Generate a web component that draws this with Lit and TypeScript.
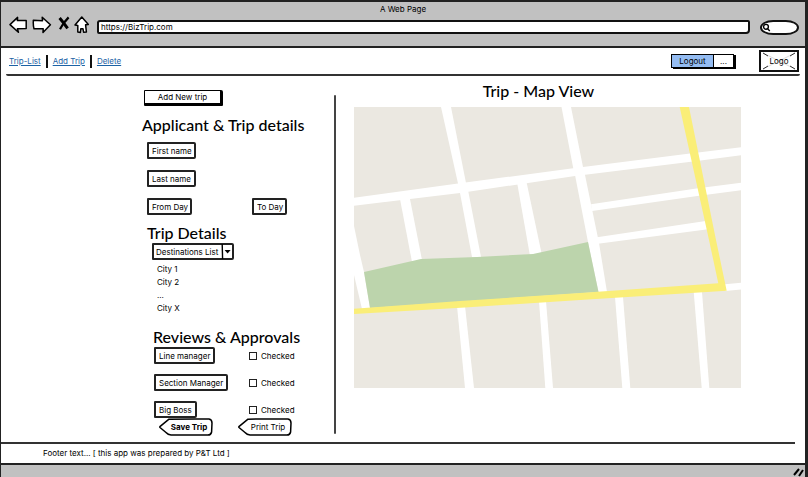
import { LitElement, html, css, svg } from "lit";
import { customElement, property, state } from "lit/decorators.js";

@customElement("map-view")
class MapView extends LitElement {
  static styles = css`
    :host {
      display: block;
    }
    .map {
      display: block;
      width: 100%;
      height: auto;
    }
    .land {
      fill: #ebe8e1;
    }
    .road {
      fill: #fff;
    }
    .park {
      fill: #bcd4ac;
    }
    .highway {
      fill: #faee78;
    }
  `;

  private roads = [
    "354,197.7 458,183.5 575,168 690,153.5 741,147.3 741,155.3 693,161.5 575,176 460,193 354,205.7",
    "441,107 451,107 466,183 468,190 481,257 472,257 460,193 458,183.5",
    "561.5,107 571,107 583,167 585,175 599,243 607,292 598.5,292 588,242 575,175 573,167",
    "354,226 360,255 364,272 370,308 362,309 354,275",
    "400,199 410,199 422,260 412,262",
    "517,182 526.5,182 541.7,254 530,256",
    "591,204.3 698,188.3 741,182.7 741,190.3 699,195.7 592,211",
    "597,237.2 705.7,221 708,229.3 598,243.7",
    "725,284.2 741,282.7 741,289.5 725,291",
    "457,306 465,306 474,388 465,388",
    "539,301 546,301 553,388 545.3,388",
    "615,297 623,297 630.3,388 622.3,388",
    "693.7,292 702,292 709.3,388 701.7,388",
  ];

  render() {
    return html`
      <svg class="map" viewBox="354 107 387 281" role="img" aria-label="Map">
        <rect class="land" x="354" y="107" width="387" height="281"></rect>
        ${this.roads.map((p) => svg`<polygon class="road" points=${p}></polygon>`)}
        <polygon class="park" points="364,272 421,259 477,257 533,254 588,242 598.5,292 370,308"></polygon>
        <polygon
          class="highway"
          points="679.7,107 689,107 716,240 726.7,290.7 580,300 465,307.5 354,314 354,308.7 460,301 580,293 718.3,283.3 709,240"
        ></polygon>
      </svg>
    `;
  }
}

@customElement("tag-button")
class TagButton extends LitElement {
  @property() label = "";
  @property({ type: Boolean }) strong = false;

  static styles = css`
    :host {
      display: block;
    }
    .tag {
      position: relative;
      isolation: isolate;
      display: block;
      width: 54px;
      height: 18px;
      margin: 0;
      padding: 0 0 0 6px;
      border: 0;
      background: none;
      color: #000;
      font: inherit;
      white-space: nowrap;
    }
    .strong {
      font-weight: 700;
    }
    .shape {
      position: absolute;
      inset: 0;
      width: 100%;
      height: 100%;
      z-index: -1;
    }
  `;

  render() {
    return html`
      <button class="tag ${this.strong ? "strong" : ""}" type="button">
        <svg class="shape" viewBox="0 0 54 18" fill="#fff" stroke="#000" stroke-width="1.5" stroke-linejoin="round" aria-hidden="true">
          <path d="M10 1.2 Q30 .8 50 1 Q53 1.5 53 5 L52.6 14 Q52 17 49 17 L12 17 Q9 16.8 7 14.5 L1 9.5 Q.6 9 1.2 8.4 Z"></path>
        </svg>
        ${this.label}
      </button>
    `;
  }
}

@customElement("app-root")
class AppRoot extends LitElement {
  @state() private reviewers = ["Line manager", "Section Manager", "Big Boss"];
  @state() private cities = ["City 1", "City 2", "...", "City X"];

  static styles = css`
    :host {
      display: flex;
      flex-direction: column;
      box-sizing: border-box;
      min-height: 100vh;
      border: solid #222;
      border-width: 2px 3px 0 1px;
      background: #fff;
      color: #000;
      font: 8px/12px Inter, "Liberation Sans", sans-serif;
    }
    * {
      box-sizing: border-box;
    }
    button,
    input,
    select {
      margin: 0;
      font: inherit;
      color: inherit;
    }
    h1,
    h2,
    ul {
      margin: 0;
      padding: 0;
    }
    h1,
    h2 {
      font-family: Lato, "Liberation Sans", sans-serif;
      font-size: 16px;
      line-height: 20px;
      font-weight: 500;
      white-space: nowrap;
    }

    .chrome {
      height: 46px;
      background: #c1c1c1;
      border-bottom: 2px solid #222;
    }
    .title {
      text-align: center;
      padding-top: 1px;
    }
    .bar {
      display: flex;
      align-items: center;
      height: 20px;
      padding: 0 6px 0 8px;
      gap: 4px;
    }
    .nav {
      display: block;
      padding: 0;
      border: 0;
      background: none;
    }
    .nav svg {
      display: block;
    }
    .url {
      flex: 1;
      min-width: 0;
      height: 14px;
      margin: 4px 6px 0 4px;
      padding: 0 2px;
      border: 2px solid #111;
      border-radius: 3px 2px 4px 2px;
      background: #fff;
    }
    .search {
      display: flex;
      align-items: center;
      width: 39px;
      height: 15px;
      margin-top: 4px;
      border: 2px solid #111;
      border-radius: 14px / 8px;
      background: #fff;
    }
    .query {
      width: 20px;
      height: 8px;
      padding: 0;
      border: 0;
      background: none;
      outline: none;
    }

    .header {
      display: flex;
      align-items: center;
      height: 28px;
      margin: 0 5px;
      padding: 0 1px 0 3px;
      border-bottom: 2px solid #333;
      border-radius: 2px;
    }
    .links {
      display: flex;
      align-items: center;
      gap: 5px;
      flex: 1;
    }
    .links a {
      color: #1c62a5;
    }
    .sep {
      width: 2px;
      height: 13px;
      background: #111;
    }
    .session {
      display: flex;
      height: 14px;
      margin-right: 25px;
      box-shadow: 2px 1px 0 #000;
    }
    .logout,
    .more {
      padding: 0;
      border: 1px solid #000;
      line-height: 12px;
    }
    .logout {
      width: 43px;
      background: #94bcf2;
    }
    .more {
      width: 20px;
      border-left: 0;
      background: #fff;
    }
    .logo {
      position: relative;
      isolation: isolate;
      width: 40px;
      height: 22px;
      border: 2px solid #111;
      line-height: 18px;
      text-align: center;
    }
    .cross {
      position: absolute;
      inset: 0;
      width: 100%;
      height: 100%;
      z-index: -1;
    }

    .main {
      display: grid;
      grid-template-columns: 333fr 471fr;
      flex: 1;
    }
    .form {
      padding: 14px 0 0 141px;
    }
    .push {
      display: block;
      width: 79px;
      height: 16px;
      margin: 0 0 9px 2px;
      padding: 0;
      border: solid #000;
      border-width: 1px 3px 3px 1px;
      border-radius: 1px 2px 1px 1px;
      background: #fff;
      line-height: 12px;
    }
    .boxed {
      height: 17px;
      padding: 0 3px;
      border: 2px solid #222;
      border-radius: 1px 2px 2px 1px;
      background: #fff;
      line-height: 12px;
      text-align: left;
      white-space: nowrap;
    }
    input.boxed {
      padding-right: 0;
    }
    .fields {
      display: grid;
      grid-template-columns: 105px 1fr;
      row-gap: 11px;
      margin: 7px 0 8px 5px;
    }
    .name {
      width: 49px;
      grid-column: 1 / -1;
    }
    .from {
      width: 45px;
    }
    .to {
      width: 35px;
    }
    .trip {
      padding-left: 5px;
    }
    .picker {
      position: relative;
      width: 82px;
      margin: 0 0 3px 5px;
    }
    .dest {
      display: block;
      width: 100%;
      padding: 0 0 0 2px;
      appearance: none;
    }
    .arrow {
      position: absolute;
      top: 0;
      right: 0;
      display: block;
      pointer-events: none;
    }
    .cities {
      padding-left: 10px;
      list-style: none;
    }
    .cities li {
      height: 13px;
      line-height: 13px;
    }
    .reviews {
      margin-top: 12px;
      padding-left: 11px;
    }
    .rows {
      display: grid;
      gap: 10px;
    }
    .row {
      display: grid;
      grid-template-columns: 95px 1fr;
      align-items: center;
      padding-left: 1px;
    }
    .row .boxed {
      justify-self: start;
    }
    .check {
      display: flex;
      align-items: center;
      gap: 4px;
    }
    .tick {
      width: 8px;
      height: 8px;
      appearance: none;
      border: 1px solid #222;
      background: #fff;
    }
    .tick:checked {
      background: #222;
    }
    .actions {
      display: grid;
      grid-template-columns: 79px 1fr;
      padding: 0 0 6px 6px;
    }

    .view {
      display: flex;
      flex-direction: column;
      position: relative;
      padding: 5px 64px 0 20px;
    }
    .view::before {
      content: "";
      position: absolute;
      left: 0;
      top: 19px;
      bottom: 8px;
      width: 2px;
      border-radius: 1px;
      background: #444;
    }
    .view h1 {
      margin: 0 0 6px;
      padding-right: 18px;
      text-align: center;
    }

    .footer {
      height: 21px;
      margin: 0 10px 0 0;
      padding: 3px 0 0 42px;
      border-top: 2px solid #333;
    }
    .status {
      display: flex;
      justify-content: flex-end;
      align-items: flex-end;
      height: 14px;
      background: #c1c1c1;
      border-top: 2px solid #222;
    }
    .status svg {
      display: block;
    }
  `;

  private icon(d: string, w: number) {
    return html`<svg width=${w} height="19" viewBox="0 0 ${w} 19" fill="#fff" stroke="#000" stroke-width="1.5" stroke-linejoin="round" aria-hidden="true">
      <path d=${d}></path>
    </svg>`;
  }

  render() {
    return html`
      <div class="chrome">
        <div class="title">A Web Page</div>
        <div class="bar">
          <button class="nav" aria-label="Back">
            ${this.icon("M1 8.6 L8.6 1.4 L8.4 4.6 L17.2 4.6 L17.2 12.6 L8.4 12.8 L9.4 16.2 Z", 19)}
          </button>
          <button class="nav" aria-label="Forward">
            ${this.icon("M1.3 4.2 L10.5 4.8 L10.2 1.2 L18.4 8.8 L11 16.4 L11.2 12.8 L2 12.8 Q1 9 1.3 4.2 Z", 20)}
          </button>
          <button class="nav" aria-label="Stop">
            <svg width="14" height="19" viewBox="0 0 14 19" fill="none" stroke="#000" stroke-width="3" aria-hidden="true">
              <path d="M3.6 2 Q7 6 11.6 12.4"></path>
              <path d="M12.6 1.4 Q8 6 4 13.2" stroke-width="2.2"></path>
            </svg>
          </button>
          <button class="nav" aria-label="Home">
            ${this.icon("M7.8 1 L14.3 8.4 L11.6 8.8 L12.4 16 L9.6 16.2 L9 12.8 L6.8 12.8 L6.4 16.4 L3.8 16 L3.8 9.4 L1 9 Z", 15)}
          </button>
          <input class="url" aria-label="Address" value="https://BizTrip.com" />
          <label class="search">
            <svg width="9" height="9" viewBox="0 0 9 9" fill="none" stroke="#000" stroke-width="1.4" aria-hidden="true">
              <circle cx="4" cy="3.8" r="2.4"></circle>
              <path d="M5.6 5.8 L7.8 8"></path>
            </svg>
            <input class="query" aria-label="Search" />
          </label>
        </div>
      </div>

      <header class="header">
        <nav class="links">
          <a href="#list">Trip-List</a><span class="sep"></span>
          <a href="#add">Add Trip</a><span class="sep"></span>
          <a href="#delete">Delete</a>
        </nav>
        <div class="session">
          <button class="logout">Logout</button>
          <button class="more">...</button>
        </div>
        <div class="logo">
          <svg class="cross" viewBox="0 0 36 18" preserveAspectRatio="none" fill="none" stroke="#ddd" aria-hidden="true">
            <path d="M2 1 L34 17 M34 1 L2 17"></path>
            <path d="M2 1 L7 4 M34 1 L29 4 M2 17 L7 14 M34 17 L29 14" stroke="#333"></path>
          </svg>
          Logo
        </div>
      </header>

      <main class="main">
        <form class="form">
          <button class="push" type="button">Add New trip</button>
          <h2>Applicant &amp; Trip details</h2>
          <div class="fields">
            <input class="boxed name" aria-label="First name" value="First name" />
            <input class="boxed name" aria-label="Last name" value="Last name" />
            <input class="boxed from" aria-label="From Day" value="From Day" />
            <input class="boxed to" aria-label="To Day" value="To Day" />
          </div>
          <section class="trip">
            <h2>Trip Details</h2>
            <div class="picker">
              <select class="boxed dest" aria-label="Destinations List">
                <option>Destinations List</option>
              </select>
              <svg class="arrow" width="13" height="17" viewBox="0 0 13 17" aria-hidden="true">
                <path d="M1.2 1 L1.6 16" stroke="#000" stroke-width="1.4"></path>
                <path d="M3.6 7 L9.6 7 L6.6 10.4 Z"></path>
              </svg>
            </div>
            <ul class="cities">
              ${this.cities.map((c) => html`<li>${c}</li>`)}
            </ul>
          </section>
          <section class="reviews">
            <h2>Reviews &amp; Approvals</h2>
            <div class="rows">
              ${this.reviewers.map(
                (r) => html`<div class="row">
                  <button class="boxed" type="button">${r}</button>
                  <label class="check"><input class="tick" type="checkbox" />Checked</label>
                </div>`
              )}
            </div>
            <div class="actions">
              <tag-button label="Save Trip" strong></tag-button>
              <tag-button label="Print Trip"></tag-button>
            </div>
          </section>
        </form>
        <section class="view">
          <h1>Trip - Map View</h1>
          <map-view></map-view>
        </section>
      </main>

      <footer class="footer">Footer text... [ this app was prepared by P&amp;T Ltd ]</footer>
      <div class="status">
        <svg width="14" height="10" viewBox="0 0 14 10" stroke="#000" stroke-width="2" aria-hidden="true">
          <path d="M3 8 L8 2 M8 9 L12 3"></path>
        </svg>
      </div>
    `;
  }
}
